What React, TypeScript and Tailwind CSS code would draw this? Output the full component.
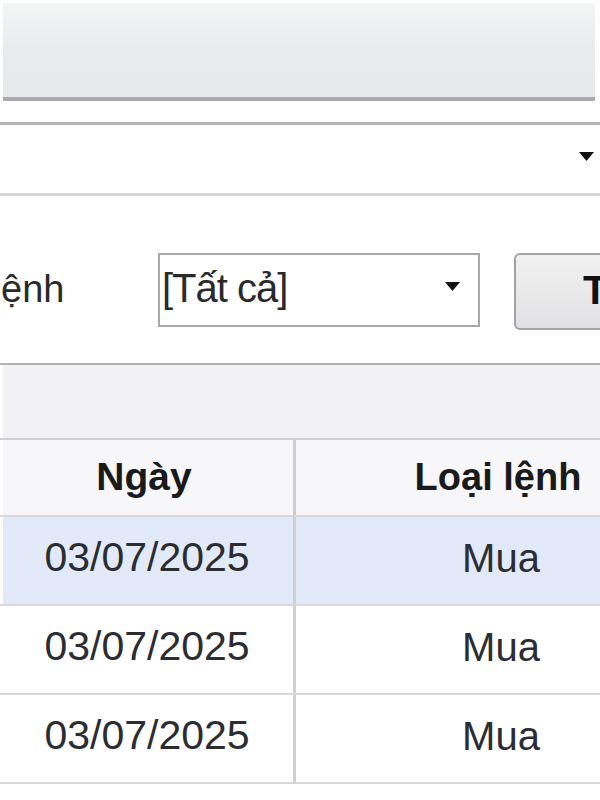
const rows = [
  { date: "03/07/2025", type: "Mua", selected: true },
  { date: "03/07/2025", type: "Mua", selected: false },
  { date: "03/07/2025", type: "Mua", selected: false },
];

function Caret({ className = "" }: { className?: string }) {
  return (
    <svg width="15" height="9" viewBox="0 0 15 9" className={className}>
      <path d="M0 0H15L7.5 9Z" fill="#111" />
    </svg>
  );
}

export default function App() {
  return (
    <div className="w-[600px] h-[800px] overflow-hidden bg-white font-['Liberation_Sans',Arial,sans-serif] text-[#2a2a2a]">
      {/* toolbar band */}
      <div className="ml-[3px] mr-[5px] mt-[3px] h-[98px] border-b-[4px] border-[#a9a9b1] bg-gradient-to-b from-[#f4f5f5] via-[#e9eaec] to-[#e8e9eb]" />
      <div className="h-[21px]" />
      <div className="h-[3px] bg-[#b4b4b7]" />

      {/* account combo */}
      <div className="h-[68px] flex items-center justify-end pr-[6px]">
        <Caret className="mt-[-6px]" />
      </div>
      <div className="h-[3px] bg-[#d4d4d6]" />

      {/* filter row */}
      <div className="h-[167px] flex items-start pt-[57px] whitespace-nowrap">
        <div className="w-[62px] h-[74px] shrink-0 flex items-center text-[38px] leading-none">
          <span className="mt-[-2px] ml-[1px]">ệnh</span>
        </div>
        <div className="ml-[96px] w-[322px] h-[74px] shrink-0 border-2 border-[#a7a7a9] bg-white flex items-center justify-between pl-[2px] pr-[18px]">
          <span className="text-[40px] leading-none tracking-[-1px] mt-[-4px]">[Tất cả]</span>
          <Caret className="mt-[-8px]" />
        </div>
        <div className="ml-[34px] w-[160px] h-[77px] shrink-0 rounded-[6px] border-2 border-[#a3a3a6] bg-gradient-to-b from-[#f1f1f1] to-[#e1e1e3] flex items-center pl-[67px]">
          <span className="text-[40px] leading-none font-bold text-[#111] mt-[-4px]">Tìm</span>
        </div>
      </div>
      <div className="h-[2px] bg-[#b2b2b6]" />

      {/* grid group bar */}
      <div className="h-[73px] bg-[#f2f2f4] border-l-[3px] border-white" />
      <div className="h-[2px] bg-[#cfcfd3]" />

      {/* header */}
      <div className="h-[75px] flex bg-[#f7f7f9] border-l-[3px] border-white">
        <div className="w-[293px] shrink-0 border-r-[3px] border-[#cdcdd0] flex items-center justify-center text-[39px] font-bold text-[#1a1a1a] pr-[8px]">
          Ngày
        </div>
        <div className="w-[404px] shrink-0 flex items-center justify-center text-[38px] font-bold text-[#1a1a1a] whitespace-nowrap">
          Loại lệnh
        </div>
      </div>
      <div className="h-[2px] bg-[#d6d8dc]" />

      {rows.map((r, i) => (
        <div key={i}>
          <div
            className={`h-[87px] flex border-l-[3px] border-white ${r.selected ? "bg-[#e2eafa]" : "bg-white"}`}
          >
            <div className="w-[293px] shrink-0 border-r-[3px] border-[#d0d0d3] flex items-center justify-center text-[41px] pb-[6px] text-[#2b2d33] pr-[2px]">
              {r.date}
            </div>
            <div className="w-[410px] shrink-0 flex items-center justify-center text-[40px] pb-[6px] text-[#2b2d33]">
              {r.type}
            </div>
          </div>
          <div className="h-[2px] bg-[#d8d8da]" />
        </div>
      ))}
    </div>
  );
}
